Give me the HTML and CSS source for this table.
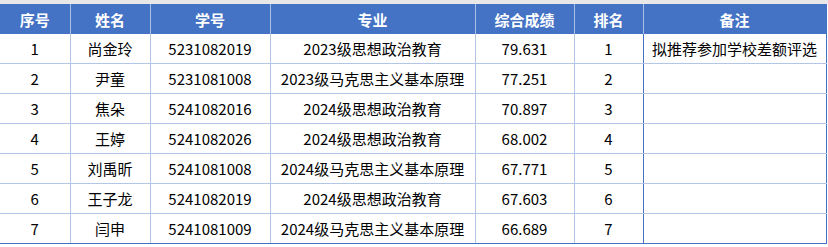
FILE: index.html
```html
<!DOCTYPE html>
<html lang="zh">
<head>
<meta charset="utf-8">
<link rel="stylesheet" href="styles.css">
</head>
<body>
<div class="strip"></div>
<table class="sheet">
  <colgroup>
    <col class="c1"><col class="c2"><col class="c3"><col class="c4"><col class="c5"><col class="c6"><col class="c7">
  </colgroup>
  <thead>
    <tr><th>序号</th><th>姓名</th><th>学号</th><th>专业</th><th>综合成绩</th><th>排名</th><th class="note">备注</th></tr>
  </thead>
  <tbody>
    <tr><td>1</td><td>尚金玲</td><td>5231082019</td><td>2023级思想政治教育</td><td>79.631</td><td class="rank">1</td><td class="note">拟推荐参加学校差额评选</td></tr>
    <tr><td>2</td><td>尹童</td><td>5231081008</td><td>2023级马克思主义基本原理</td><td>77.251</td><td class="rank">2</td><td class="note"></td></tr>
    <tr><td>3</td><td>焦朵</td><td>5241082016</td><td>2024级思想政治教育</td><td>70.897</td><td class="rank">3</td><td class="note"></td></tr>
    <tr><td>4</td><td>王婷</td><td>5241082026</td><td>2024级思想政治教育</td><td>68.002</td><td class="rank">4</td><td class="note"></td></tr>
    <tr><td>5</td><td>刘禹昕</td><td>5241081008</td><td>2024级马克思主义基本原理</td><td>67.771</td><td class="rank">5</td><td class="note"></td></tr>
    <tr><td>6</td><td>王子龙</td><td>5241082019</td><td>2024级思想政治教育</td><td>67.603</td><td class="rank">6</td><td class="note"></td></tr>
    <tr><td>7</td><td>闫申</td><td>5241081009</td><td>2024级马克思主义基本原理</td><td>66.689</td><td class="rank">7</td><td class="note"></td></tr>
  </tbody>
</table>
</body>
</html>
```
FILE: styles.css
```css
html, body {
  margin: 0;
  padding: 0;
  background: #ffffff;
}
body {
  font-family: "Noto Sans CJK SC", "Noto Sans", sans-serif;
  font-size: 15px;
  color: #000000;
  width: 828px;
  height: 247px;
  overflow: hidden;
}
.strip {
  height: 4px;
  background: #e8e8e8;
  width: 828px;
}
.sheet {
  border-collapse: collapse;
  table-layout: fixed;
  width: 826px;
}
.c1 { width: 70px; }
.c2 { width: 80px; }
.c3 { width: 120px; }
.c4 { width: 205px; }
.c5 { width: 99px; }
.c6 { width: 69px; }
.c7 { width: 183px; }
.sheet th {
  background: #4472c4;
  color: #ffffff;
  font-weight: bold;
  height: 30px;
  padding: 0;
  text-align: center;
  border-right: 1px solid #a9bfe6;
  line-height: 1;
  box-sizing: border-box;
}
.sheet th.note {
  border-right: 1px solid #4472c4;
}
.sheet td {
  height: 29px;
  padding: 0;
  text-align: center;
  border-right: 1px solid #b4c6e7;
  border-bottom: 1px solid #b4c6e7;
  line-height: 1;
  white-space: nowrap;
  overflow: hidden;
}
.sheet td.rank {
  border-right: 1px solid #4472c4;
}
.sheet td.note {
  border-right: 1px solid #4472c4;
}
.sheet tbody tr:last-child td {
  border-bottom: 1px solid #4472c4;
}
```
